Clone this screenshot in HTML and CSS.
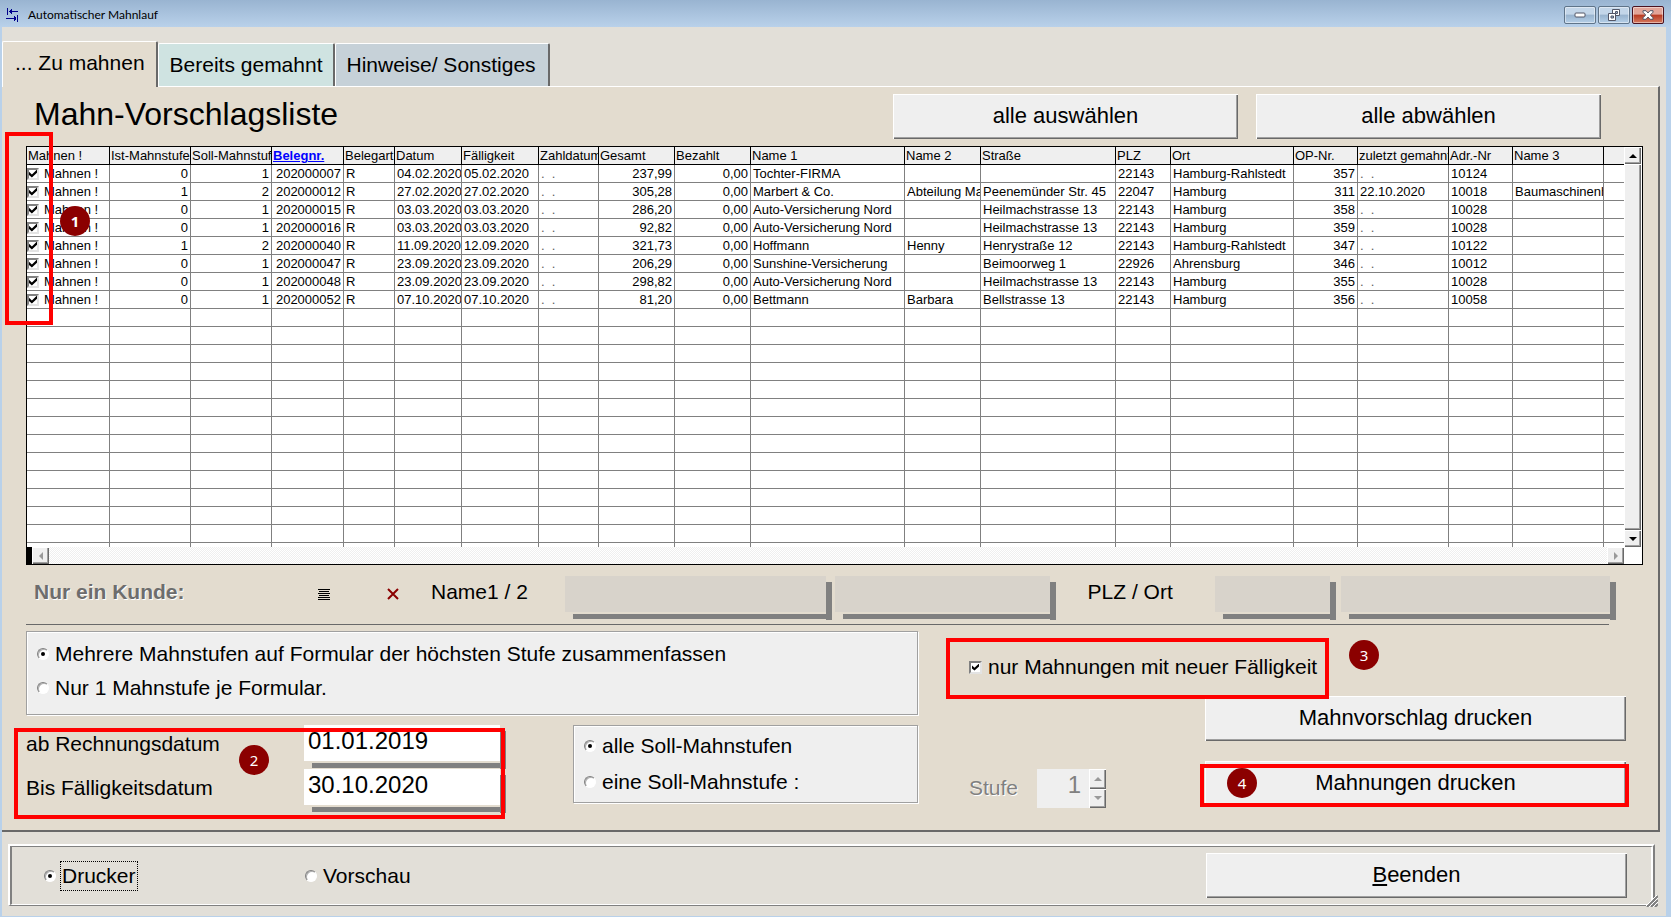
FILE: index.html
```html
<!DOCTYPE html>
<html lang="de">
<head>
<meta charset="utf-8">
<title>Automatischer Mahnlauf</title>
<link rel="stylesheet" href="styles.css">
</head>
<body>
<div class="window">
  <header class="titlebar">
    <svg class="app-icon" width="14" height="14" viewBox="0 0 14 14" shape-rendering="crispEdges" fill="#00008b">
      <path d="M1 0h1v7h-1zM3 3h9v1h-9zM4 2h2v3h-2zM5 1h1v5h-1zM0 10h10v1h-10zM8 9h2v3h-2zM8 8h1v5h-1zM11 7h1v7h-1z"/>
    </svg>
    <h1 class="window-title">Automatischer Mahnlauf</h1>
    <div class="window-buttons">
      <button class="win-btn" aria-label="Minimieren">
        <svg width="12" height="6" viewBox="0 0 12 6"><rect x="1" y="1" width="10" height="4" rx="1" fill="#fff" stroke="#535666"/></svg>
      </button>
      <button class="win-btn" aria-label="Wiederherstellen">
        <svg width="12" height="12" viewBox="0 0 12 12"><g fill="#fff" stroke="#535666"><path d="M4.500 .5h7v6h-7z"/><path d="M7.500 2.500h2v2h-2z" fill="#9db8d3"/><path d="M.5 4.500h7v7h-7z"/><path d="M3 7h2.500v2h-2.500z" fill="#9db8d3"/></g></svg>
      </button>
      <button class="win-btn win-close" aria-label="Schließen">
        <svg width="12" height="10" viewBox="0 0 12 10"><path d="M1 .7h3L6 3 8 .7h3v1.500L8.300 5 11 7.800v1.500H8L6 7 4 9.300H1V7.800L3.700 5 1 2.200z" fill="#fff" stroke="#535666"/></svg>
      </button>
    </div>
  </header>

  <main class="form">
    <nav class="tabs" role="tablist">
      <button class="tab tab-active" role="tab" aria-selected="true">... Zu mahnen</button>
      <button class="tab tab-done" role="tab">Bereits gemahnt</button>
      <button class="tab tab-notes" role="tab">Hinweise/ Sonstiges</button>
    </nav>

    <section class="page">
      <div class="page-head">
        <h2>Mahn-Vorschlagsliste</h2>
        <button class="btn">alle auswählen</button>
        <button class="btn">alle abwählen</button>
      </div>

      <div class="list">
        <div class="list-view">
          <table class="grid">
            <colgroup>
              <col class="w83"><col class="w81"><col class="w81"><col class="w72"><col class="w51"><col class="w67"><col class="w77"><col class="w60"><col class="w76"><col class="w76"><col class="w154"><col class="w76"><col class="w135"><col class="w55"><col class="w123"><col class="w64"><col class="w91"><col class="w64"><col class="w91"><col>
            </colgroup>
            <thead>
              <tr><th>Mahnen !</th><th>Ist-Mahnstufe</th><th>Soll-Mahnstufe</th><th><a href="#">Belegnr.</a></th><th>Belegart</th><th>Datum</th><th>Fälligkeit</th><th>Zahldatum</th><th>Gesamt</th><th>Bezahlt</th><th>Name 1</th><th>Name 2</th><th>Straße</th><th>PLZ</th><th>Ort</th><th>OP-Nr.</th><th>zuletzt gemahnt</th><th>Adr.-Nr</th><th>Name 3</th><th></th></tr>
            </thead>
            <tbody id="rows"></tbody>
          </table>
        </div>
        <div class="vscroll">
          <button class="sb-btn" aria-label="Nach oben"><svg width="8" height="4" viewBox="0 0 8 4"><path d="M0 4 4 0l4 4z"/></svg></button>
          <div class="sb-thumb"></div>
          <button class="sb-btn" aria-label="Nach unten"><svg width="8" height="4" viewBox="0 0 8 4"><path d="M0 0h8L4 4z"/></svg></button>
        </div>
        <div class="hscroll">
          <button class="sb-btn sb-off" aria-label="Nach links" disabled><svg width="4" height="8" viewBox="0 0 4 8"><path d="M4 0v8L0 4z"/></svg></button>
          <div class="sb-track"></div>
          <button class="sb-btn sb-off" aria-label="Nach rechts" disabled><svg width="4" height="8" viewBox="0 0 4 8"><path d="M0 0v8l4-4z"/></svg></button>
        </div>
        <div class="mark mark-list"></div>
        <span class="badge badge-list">1</span>
      </div>

      <div class="customer">
        <span class="customer-title">Nur ein Kunde:</span>
        <button class="icon-btn" aria-label="Kunde wählen"><svg width="12" height="11" viewBox="0 0 12 11" shape-rendering="crispEdges"><path d="M0 0h12v1H0zM1 2h10v1H1zM0 4h12v1H0zM1 6h10v1H1zM0 8h12v1H0zM0 10h12v1H0z"/></svg></button>
        <button class="icon-btn" aria-label="Kunde entfernen"><svg width="12" height="12" viewBox="0 0 12 12"><path d="M1 1l10 10M11 1 1 11" stroke="#8b0000" stroke-width="2" fill="none"/></svg></button>
        <label for="name1">Name1 / 2</label>
        <div class="field field-off gap-s"><input id="name1" type="text" disabled></div>
        <div class="field field-off"><input type="text" aria-label="Name 2" disabled></div>
        <label class="label-place" for="plz">PLZ / Ort</label>
        <div class="field field-off gap-m"><input id="plz" type="text" disabled></div>
        <div class="field field-off"><input type="text" aria-label="Ort" disabled></div>
      </div>
      <hr class="rule">

      <div class="options">
        <div class="options-left">
          <div class="group group-form">
            <label class="choice"><input type="radio" name="form" checked>Mehrere Mahnstufen auf Formular der höchsten Stufe zusammenfassen</label>
            <label class="choice"><input type="radio" name="form">Nur 1 Mahnstufe je Formular.</label>
          </div>
          <div class="options-row">
            <div class="dates">
              <label for="from">ab Rechnungsdatum</label>
              <div class="field field-date"><input id="from" type="text" value="01.01.2019"></div>
              <label for="until">Bis Fälligkeitsdatum</label>
              <div class="field field-date"><input id="until" type="text" value="30.10.2020"></div>
              <div class="mark mark-dates"></div>
              <span class="badge badge-dates">2</span>
            </div>
            <div class="group group-level">
              <label class="choice"><input type="radio" name="level" checked>alle Soll-Mahnstufen</label>
              <label class="choice"><input type="radio" name="level">eine Soll-Mahnstufe :</label>
            </div>
          </div>
        </div>
        <div class="options-right">
          <div class="due">
            <label class="choice"><input type="checkbox" checked>nur Mahnungen mit neuer Fälligkeit</label>
            <div class="mark mark-due"></div>
            <span class="badge badge-due">3</span>
          </div>
          <button class="btn btn-proposal">Mahnvorschlag drucken</button>
          <div class="level">
            <label for="level">Stufe</label>
            <div class="spinner">
              <input id="level" type="text" value="1" disabled>
              <div class="spin-btns">
                <button class="spin" aria-label="Höher" disabled><svg width="8" height="4" viewBox="0 0 8 4"><path d="M0 4 4 0l4 4z"/></svg></button>
                <button class="spin" aria-label="Niedriger" disabled><svg width="8" height="4" viewBox="0 0 8 4"><path d="M0 0h8L4 4z"/></svg></button>
              </div>
            </div>
          </div>
          <div class="print">
            <button class="btn">Mahnungen drucken</button>
            <div class="mark mark-print"></div>
            <span class="badge badge-print">4</span>
          </div>
        </div>
      </div>
    </section>

    <footer class="footer">
      <div class="footer-inner">
        <label class="choice out-printer"><input type="radio" name="out" checked><span class="focus">Drucker</span></label>
        <label class="choice"><input type="radio" name="out">Vorschau</label>
        <button class="btn btn-end"><u>B</u>eenden</button>
      </div>
      <svg class="grip" width="12" height="12" viewBox="0 0 12 12" stroke-width="2"><path d="M1 12 12 1M5 12l7-7M9 12l3-3" stroke="#808080"/><path d="M0 11 11 0M3 12l9-9M7 12l5-5" stroke="#fff" stroke-width="1"/></svg>
    </footer>
  </main>
</div>
<script src="rows.js"></script>
</body>
</html>
```
FILE: styles.css
```css
* { box-sizing: border-box; }

body {
  margin: 0;
  background: #b9d1ea;
  color: #000;
  font: 21px/24px "Liberation Sans", Arial, sans-serif;
}

button, input { font: inherit; color: inherit; margin: 0; border-radius: 0; }
button { padding: 0; }

.window { display: flex; flex-direction: column; min-height: 100vh; padding: 0 5px 1px 2px; }

/* Title bar */
.titlebar {
  display: flex;
  align-items: center;
  height: 27px;
  margin: 0 -5px 0 -2px;
  padding: 3px 7px 0 6px;
  background: linear-gradient(#99b4d1, #b9d1ea);
}
.app-icon { flex: none; }
.window-title { margin: 0 0 0 8px; font: 12px/20px Lato, "Noto Sans", sans-serif; }
.window-buttons { display: flex; gap: 2px; margin: 0 0 0 auto; }
.win-btn {
  display: grid;
  place-items: center;
  width: 32px;
  height: 18px;
  border: 1px solid #5f7489;
  border-radius: 2px;
  background: linear-gradient(#c3d6e9 45%, #98b3ce 50%, #b5cfe8);
  box-shadow: inset 0 0 0 1px rgba(255, 255, 255, .45);
}
.win-close { border-color: #4a1220; background: linear-gradient(#e2a498 45%, #b83a22 50%, #d4795f); }

/* Tabs */
.form { flex: 1; display: flex; flex-direction: column; background: #e2dfd8; }
.tabs { display: flex; align-items: flex-end; height: 59px; }
.tab {
  height: 43px;
  border: 0;
  border-top: 1px solid #fff;
  border-left: 1px solid #fff;
  border-right: 2px solid #696969;
  border-radius: 2px 2px 0 0;
}
.tab-active {
  position: relative;
  height: 46px;
  margin-bottom: -1px;
  padding: 0 11px 4px 12px;
  background: #e3dccf;
}
.tab-done { padding: 0 10px 0 11px; background: #cfe3e1; }
.tab-notes { padding: 0 12px 0 11px; background: #c6d1d8; }

.page {
  margin: 0 6px 0 0;
  padding: 7px 15px 17px 24px;
  border-top: 1px solid #fff;
  border-right: 2px solid #696969;
  border-bottom: 2px solid #696969;
  background: #e3dccf;
}
.page-head { display: flex; gap: 18px; padding-right: 42px; }
.page-head h2 { flex: 1; margin: 0; padding-left: 8px; font: 32px/40px "Liberation Sans", Arial, sans-serif; }
.page-head .btn { flex: 0 0 345px; }

.btn {
  height: 45px;
  padding-bottom: 2px;
  border: 0;
  background: #efefef;
  box-shadow: inset 1px 1px #fff, inset -1px -1px #696969, inset -2px -2px #a0a0a0;
  font-size: 22px;
}

/* List */
.list {
  position: relative;
  display: grid;
  grid-template-columns: minmax(0, 1fr) 17px;
  margin-top: 7px;
  border: 1px solid #000;
  padding-right: 1px;
  background: #fff;
}
.list-view { height: 400px; overflow: hidden; }
.grid { width: 100%; table-layout: fixed; border-collapse: separate; border-spacing: 0; font-size: 13px; line-height: 17px; }
.grid th, .grid td {
  height: 18px;
  padding: 0 2px;
  border: 0 solid #808080;
  border-width: 0 1px 1px 0;
  text-align: left;
  font-weight: 400;
  white-space: nowrap;
  overflow: hidden;
}
.grid th { border-color: #000; background: #efefef; padding: 0 0 0 1px; }
.grid th:last-child, .grid td:last-child { border-right: 0; }
.grid th a { color: #00f; font-weight: 700; }
.grid td.num { text-align: right; }
.grid td.blank { color: #606060; white-space: pre; }
.grid label { display: flex; align-items: center; gap: 5px; height: 17px; margin-left: -2px; }
.w51 { width: 51px; } .w55 { width: 55px; } .w60 { width: 60px; } .w64 { width: 64px; }
.w67 { width: 67px; } .w72 { width: 72px; } .w76 { width: 76px; } .w77 { width: 77px; }
.w81 { width: 81px; } .w83 { width: 83px; } .w91 { width: 91px; } .w123 { width: 123px; }
.w135 { width: 135px; } .w154 { width: 154px; }

.vscroll { display: flex; flex-direction: column; }
.sb-btn, .sb-thumb, .spin {
  border: 0;
  background: #efefef;
  box-shadow: inset 1px 1px #fff, inset -1px -1px #696969, inset -2px -2px #a0a0a0;
}
.sb-btn { display: grid; place-items: center; width: 17px; height: 17px; flex: none; }
.sb-thumb { flex: 1; }
.sb-off, .spin { fill: #999; }
.hscroll { display: flex; border-left: 5px solid #000; }
.sb-track { flex: 1; background: repeating-conic-gradient(#efefef 0 25%, #fff 0 50%) 0 0 / 2px 2px; }

/* Markers that lie over the form */
.mark { position: absolute; border: 4px solid #f00; pointer-events: none; }
.badge {
  position: absolute;
  width: 30px;
  height: 30px;
  border-radius: 50%;
  background: #8b0000;
  color: #fff;
  font: 15px/30px "Noto Sans", sans-serif;
  text-align: center;
}
.mark-list { left: -22px; top: -15px; width: 48px; height: 193px; }
.badge-list { left: 33px; top: 59px; font-weight: 700; }
.mark-dates { left: -12px; top: 3px; width: 491px; height: 91px; }
.badge-dates { left: 213px; top: 20px; }
.mark-due { inset: 7px auto auto 28px; width: 383px; height: 61px; }
.badge-due { left: 431px; top: 9px; }
.mark-print { inset: 3px -3px -1px -5px; }
.badge-print { left: 22px; top: 7px; }

/* Customer row */
.customer {
  display: grid;
  grid-template-columns: 284px 69px 44px 134px minmax(0, 270fr) minmax(0, 220fr) 159px minmax(0, 126fr) minmax(0, 275fr);
  margin-top: 11px;
  padding: 0 27px 0 8px;
}
.customer > label, .customer-title { padding-top: 4px; }
.customer-title { color: #6d6d6d; font-weight: 700; text-shadow: 1px 1px #fff; }
.customer .label-place { padding-left: 32px; }
.icon-btn { display: block; width: 12px; height: 12px; margin-top: 12px; border: 0; background: none; line-height: 0; }
.icon-btn svg { display: block; }

.field { position: relative; height: 44px; padding: 0 6px 8px 0; }
.field::before { content: ""; position: absolute; inset: 38px 0 1px 8px; background: #808080; }
.field::after { content: ""; position: absolute; inset: 6px 0 0 auto; width: 6px; background: #808080; }
.field input { display: block; width: 100%; height: 36px; border: 0; padding: 0 4px 4px; background: #fff; font-size: 24px; }
.field-off input { background: #d8d3cb; }
.gap-s { margin-right: 3px; }
.gap-m { margin-right: 5px; }
.rule { height: 1px; margin: 4px 34px 0 0; border: 0; background: #696969; }

/* Options */
.options { display: grid; grid-template-columns: 892px minmax(0, 1fr); margin-top: 6px; }
.group { display: flex; flex-direction: column; border: 1px solid #a0a0a0; box-shadow: 1px 1px #fff, inset 1px 1px #fff; background: #efefef; }
.group-form { height: 84px; gap: 10px; padding: 10px; }
.group-level { flex: 1; height: 78px; gap: 12px; padding: 8px 10px; }
.options-row { display: flex; margin-top: 10px; }
.dates { position: relative; display: grid; grid-template-columns: 278px 202px; align-content: start; width: 547px; }
.dates > label { padding-top: 7px; }

.choice { display: flex; align-items: center; gap: 6px; }
input[type="radio"], input[type="checkbox"] { position: relative; flex: none; appearance: none; width: 12px; height: 12px; background: #fff; }
input[type="radio"] { border: 1px solid; border-color: #808080 #fff #fff #808080; border-radius: 50%; box-shadow: inset 1px 1px #b0b0b0; }
input[type="radio"]:checked::before { content: ""; position: absolute; inset: 3px; border-radius: 50%; background: #000; }
input[type="checkbox"] { border: 2px solid; border-color: #808080 #e3e3e3 #e3e3e3 #808080; width: 13px; height: 13px; }
input[type="checkbox"]:checked::before {
  content: "";
  position: absolute;
  inset: 1px;
  background: #000;
  clip-path: polygon(0 28%, 36% 62%, 100% 0, 100% 42%, 36% 100%, 0 70%);
}
.grid input[type="checkbox"] { width: 12px; height: 12px; }
.grid input[type="checkbox"]:checked::before { inset: 0; }

.options-right {
  position: relative;
  display: grid;
  grid-template-columns: minmax(0, 1fr) 421px;
  grid-template-rows: 65px 45px 47px;
  padding-right: 17px;
}
.due { grid-column: 1 / -1; padding: 24px 0 0 51px; }
.btn-proposal { grid-column: 2; }
.level { grid-row: 3; display: flex; gap: 20px; padding: 28px 0 0 51px; color: #808080; }
.level label { width: 48px; padding-top: 7px; text-shadow: 1px 1px #fff; }
.print { position: relative; z-index: 1; grid-row: 3; grid-column: 2; align-self: start; margin-top: 20px; height: 45px; }
.print .btn { width: 100%; }
.spinner { display: flex; width: 69px; height: 39px; }
.spinner input { width: 52px; border: 0; padding: 0 8px 8px 0; background: #efefef; text-align: right; font-size: 24px; }
.spin-btns { display: flex; flex-direction: column; width: 17px; }
.spin { flex: 1; display: grid; place-items: center; }

/* Footer */
.footer {
  position: relative;
  margin: 12px 11px 8px 6px;
  border: solid;
  border-width: 2px 2px 1px 2px;
  border-color: #fff #808080 #808080 #fff;
}
.footer-inner {
  display: flex;
  align-items: center;
  height: 59px;
  padding: 0 24px 0 32px;
  border: solid;
  border-width: 1px 2px 1px 2px;
  border-color: #808080 #fff #fff #808080;
}
.out-printer { width: 261px; gap: 4px; }
.focus { padding: 2px 1px; border: 1px dotted #000; }
.btn-end { width: 421px; margin-left: auto; }
.grip { position: absolute; right: -5px; bottom: -2px; }
```
FILE: rows.js
```js
const rows = [
  [0, 1, "202000007", "R", "04.02.2020", "05.02.2020", "237,99", "0,00", "Tochter-FIRMA", "", "", "22143", "Hamburg-Rahlstedt", 357, "", "10124", ""],
  [1, 2, "202000012", "R", "27.02.2020", "27.02.2020", "305,28", "0,00", "Marbert & Co.", "Abteilung Maschinen", "Peenemünder Str. 45", "22047", "Hamburg", 311, "22.10.2020", "10018", "Baumaschinenhandel"],
  [0, 1, "202000015", "R", "03.03.2020", "03.03.2020", "286,20", "0,00", "Auto-Versicherung Nord", "", "Heilmachstrasse 13", "22143", "Hamburg", 358, "", "10028", ""],
  [0, 1, "202000016", "R", "03.03.2020", "03.03.2020", "92,82", "0,00", "Auto-Versicherung Nord", "", "Heilmachstrasse 13", "22143", "Hamburg", 359, "", "10028", ""],
  [1, 2, "202000040", "R", "11.09.2020", "12.09.2020", "321,73", "0,00", "Hoffmann", "Henny", "Henrystraße 12", "22143", "Hamburg-Rahlstedt", 347, "", "10122", ""],
  [0, 1, "202000047", "R", "23.09.2020", "23.09.2020", "206,29", "0,00", "Sunshine-Versicherung", "", "Beimoorweg 1", "22926", "Ahrensburg", 346, "", "10012", ""],
  [0, 1, "202000048", "R", "23.09.2020", "23.09.2020", "298,82", "0,00", "Auto-Versicherung Nord", "", "Heilmachstrasse 13", "22143", "Hamburg", 355, "", "10028", ""],
  [0, 1, "202000052", "R", "07.10.2020", "07.10.2020", "81,20", "0,00", "Bettmann", "Barbara", "Bellstrasse 13", "22143", "Hamburg", 356, "", "10058", ""]
];
const COLUMNS = 20;
const VISIBLE_ROWS = 22;
const NUMERIC = new Set([1, 2, 3, 8, 9, 15]);
const DATES = new Set([7, 16]);
const body = document.getElementById("rows");

for (let r = 0; r < VISIBLE_ROWS; r++) {
  const tr = body.insertRow();
  const data = rows[r];
  let values = [];
  if (data) {
    values = ["", ...data.slice(0, 6), "", ...data.slice(6), ""];
  }
  for (let c = 0; c < COLUMNS; c++) {
    const td = tr.insertCell();
    if (!data) continue;
    if (c === 0) {
      const label = document.createElement("label");
      const box = document.createElement("input");
      box.type = "checkbox";
      box.checked = true;
      label.append(box, "Mahnen !");
      td.append(label);
    } else if (DATES.has(c) && values[c] === "") {
      td.className = "blank";
      td.textContent = ".  .";
    } else {
      td.textContent = values[c];
      if (NUMERIC.has(c)) td.className = "num";
    }
  }
}
```
